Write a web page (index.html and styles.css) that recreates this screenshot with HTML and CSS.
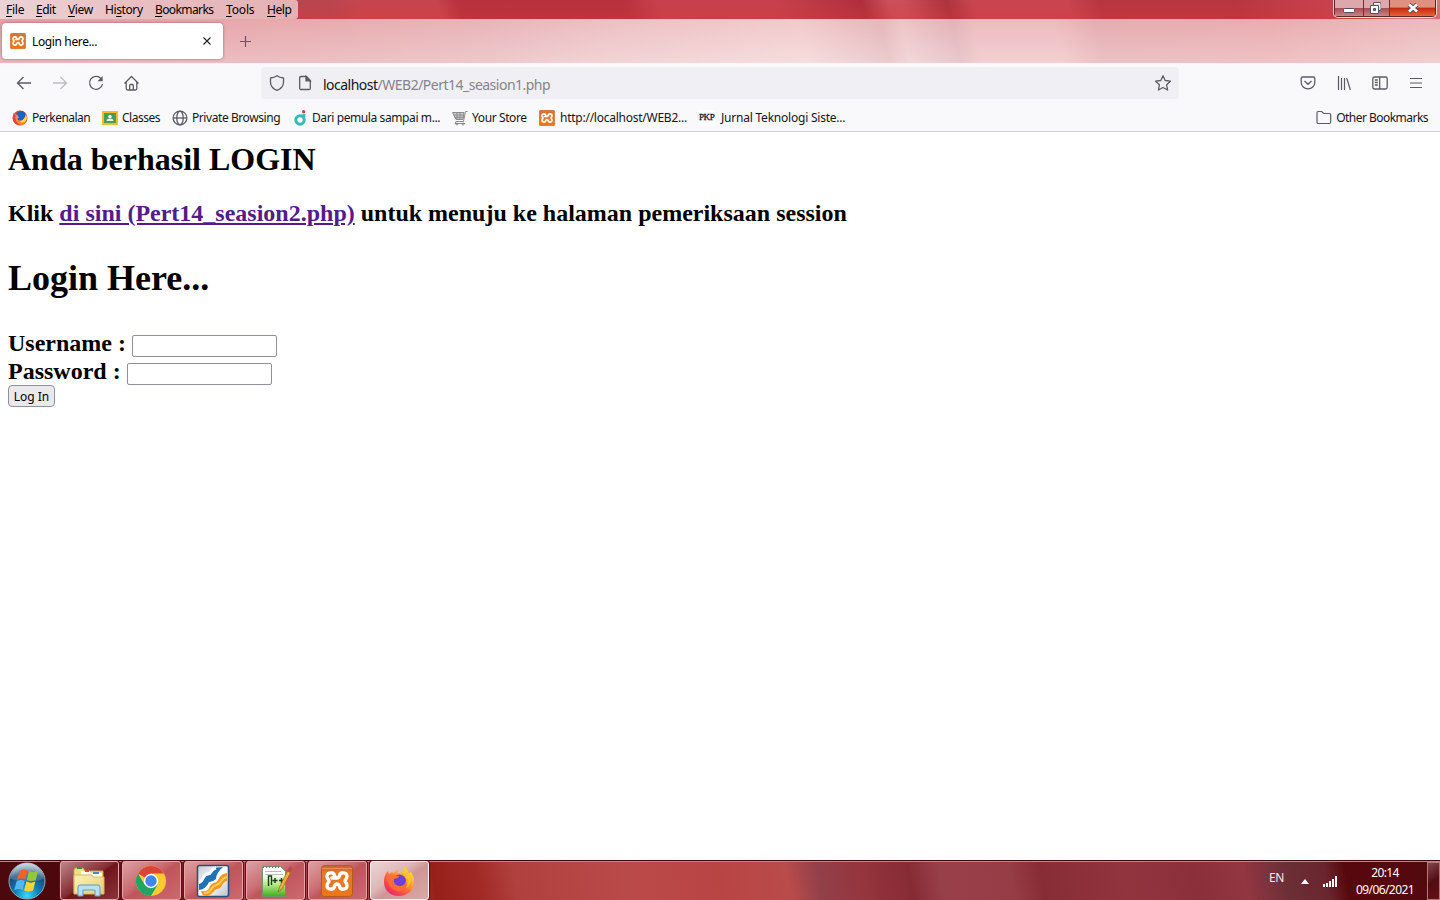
FILE: index.html
```html
<!DOCTYPE html>
<html lang="en">
<head>
<meta charset="utf-8">
<title>Login here...</title>
<link rel="stylesheet" href="styles.css">
</head>
<body>
<svg class="defs" width="0" height="0">
  <defs>
    <linearGradient id="orange" x2="0" y2="1"><stop stop-color="#c8642c"/><stop offset=".25" stop-color="#e27a30"/><stop offset="1" stop-color="#ee7518"/></linearGradient>
    <linearGradient id="fire" x1="1" y1="0" x2=".2" y2="1"><stop stop-color="#fff04a"/><stop offset=".35" stop-color="#ffb52a"/><stop offset=".65" stop-color="#ff603c"/><stop offset="1" stop-color="#e4206e"/></linearGradient>
    <radialGradient id="orb" cx=".5" cy=".9" r=".85"><stop stop-color="#36dcff"/><stop offset=".4" stop-color="#117cb4"/><stop offset=".75" stop-color="#174b78"/><stop offset="1" stop-color="#8ba6bb"/></radialGradient>
    <linearGradient id="gloss" x2="0" y2="1"><stop stop-color="#fff" stop-opacity=".8"/><stop offset="1" stop-color="#fff" stop-opacity=".15"/></linearGradient>
    <linearGradient id="paper" x2="0" y2="1"><stop offset=".25" stop-color="#fff"/><stop offset=".6" stop-color="#b5e88a"/><stop offset="1" stop-color="#3fae1a"/></linearGradient>
    <linearGradient id="manila" x2="1" y2="1"><stop stop-color="#fff3b5"/><stop offset="1" stop-color="#e8cc72"/></linearGradient>
    <linearGradient id="silver" x2="1" y2="1"><stop stop-color="#bfcbd6"/><stop offset=".5" stop-color="#fff"/><stop offset="1" stop-color="#b9c3cb"/></linearGradient>
    <symbol id="xampp" viewBox="0 0 32 32">
      <rect x=".5" y=".5" width="31" height="31" rx="3" fill="url(#orange)" stroke="#b85a20"/>
      <path d="M1 3.500h30" stroke="#eda06c" stroke-width="1" opacity=".7"/>
      <path d="M16 13C14.500 13 14 12.500 13.500 10.500C12.500 6.500 6 7 6 11.500C6 14 8 14.500 8 16C8 17.500 6 18 6 20.500C6 25 12.500 25.500 13.500 21.500C14 19.500 14.500 19 16 19C17.500 19 18 19.500 18.500 21.500C19.500 25.500 26 25 26 20.500C26 18 24 17.500 24 16C24 14.500 26 14 26 11.500C26 7 19.500 6.500 18.500 10.500C18 12.500 17.500 13 16 13ZM16 13H10.800" fill="none" stroke="#fff" stroke-width="3.300" stroke-linecap="round" stroke-linejoin="round"/>
    </symbol>
    <symbol id="firefox" viewBox="0 0 32 32">
      <path d="M21 1C24 4 25 6 25.500 8C27 9 27.500 6.500 27.500 6.500C30.500 10 31.500 14 31 18C30 26 24 31 16 31C7 31 1 25 1 17C1 12 2 9 5 6L6 9C8 7 9 7 11 8C12 6 14 5 15 5C14 7 15 8 18 9C20 7 21 4 21 1Z" fill="url(#fire)"/>
      <circle cx="16.500" cy="16" r="6.500" fill="#6a43d6"/>
      <path d="M3 11C7 9 11 11 16 11C15 14 13 13 11 14C10 18 13 21 17 21C20 21 22 19 23 16C25 22 20 27 15 26C8 25 4 18 3 11Z" fill="#ff6c38"/>
      <path d="M20 8c5 4 6 9 3 15c6-3 6-11 1-16Z" fill="#ffc332"/>
    </symbol>
  </defs>
</svg>

<header class="browser">
  <div class="titlebar">
    <nav class="menu">
      <span class="m-file"><u>F</u>ile</span><span class="m-edit"><u>E</u>dit</span><span class="m-view"><u>V</u>iew</span><span class="m-history">Hi<u>s</u>tory</span><span class="m-bookmarks"><u>B</u>ookmarks</span><span class="m-tools"><u>T</u>ools</span><span class="m-help"><u>H</u>elp</span>
    </nav>
    <div class="controls">
      <span class="ctl min"><svg width="14" height="12"><rect x="1.500" y="6.500" width="11" height="4" rx="1" fill="#fff" stroke="#555064"/></svg></span>
      <span class="ctl max"><svg width="14" height="14"><path d="M4.500 1.500h7v8h-7z" fill="#ddd" stroke="#555064"/><path d="M5 2.500h6v6" fill="none" stroke="#fff"/><path d="M1.500 4.500h8v8h-8z" fill="#fff" stroke="#555064"/><path d="M4.500 7.500h2v2h-2z" fill="#a66" stroke="#555064"/></svg></span>
      <span class="ctl close"><svg width="14" height="12"><path d="M3 2.500l8 7m0-7l-8 7" stroke="#555064" stroke-width="4.500"/><path d="M3 2.500l8 7m0-7l-8 7" stroke="#fff" stroke-width="2.600"/></svg></span>
    </div>
  </div>
  <div class="tabs">
    <div class="tab">
      <svg width="16" height="16"><use href="#xampp"/></svg>
      <span class="tab-title">Login here...</span>
      <svg class="tab-close" width="10" height="10"><path d="M1.500 1.500l7 7M8.500 1.500l-7 7" stroke="#26252c" stroke-width="1.200"/></svg>
    </div>
    <svg class="newtab" width="12" height="12"><path d="M5.500 0v11M0 5.500h11" stroke="#66575f" stroke-width="1.200"/></svg>
  </div>
  <div class="toolbar">
    <div class="nav">
      <svg width="16" height="16" fill="none" stroke="#5b5b66" stroke-width="1.300"><path d="M15 8H1.500M7.500 2l-6 6l6 6"/></svg>
      <svg width="16" height="16" fill="none" stroke="#bdbdc5" stroke-width="1.300"><path d="M1 8h13.500M8.500 2l6 6l-6 6"/></svg>
      <svg width="16" height="16" fill="none" stroke="#5b5b66" stroke-width="1.300"><path d="M13 3.500A6.500 6.500 0 1 0 14.500 9"/><path d="M14.700 1v5.200H9.500z" fill="#5b5b66" stroke="none"/></svg>
      <svg width="16" height="16" fill="none" stroke="#5b5b66" stroke-width="1.300"><path d="M.5 8.500l7-7l7 7M2.200 7v6.500q0 1.500 1.500 1.500h7.600q1.500 0 1.500-1.500V7M5.700 15v-4.500q0-1 1-1h1.600q1 0 1 1V15"/></svg>
    </div>
    <div class="urlbar">
      <svg width="16" height="16" fill="none" stroke="#5b5b66" stroke-width="1.300"><path d="M8 .8C10 2.300 12 2.800 14.500 3v4.500C14.300 11 11.500 14 8 15.300C4.500 14 1.700 11 1.500 7.500V3C4 2.800 6 2.300 8 .8Z"/></svg>
      <svg width="14" height="16" fill="none" stroke="#5b5b66" stroke-width="1.300"><path d="M8.500 1.500H3q-1.300 0-1.300 1.300v10.400Q1.700 14.500 3 14.500h8q1.300 0 1.300-1.300V5.500z"/><path d="M8 1.500v4.300h4.300z" fill="#5b5b66"/></svg>
      <span class="url">localhost<span class="path">/WEB2/Pert14_seasion1.php</span></span>
      <svg class="star" width="16" height="16" fill="none" stroke="#5b5b66" stroke-width="1.300" stroke-linejoin="round"><path d="M8 .8l2.200 4.700l5.200 .7l-3.800 3.600l1 5.200L8 12.500l-4.600 2.500l1-5.200L.6 6.200l5.200-.7z"/></svg>
    </div>
    <div class="tools">
      <svg width="16" height="16" fill="none" stroke="#5b5b66" stroke-width="1.300"><path d="M2.500 2h11q1.300 0 1.300 1.300V7.500a6.800 6.300 0 0 1-13.600 0V3.300Q1.200 2 2.500 2ZM4.500 6l3.500 3.300L11.500 6"/></svg>
      <svg width="16" height="16" fill="none" stroke="#5b5b66" stroke-width="1.200"><path d="M2.500 1v14M5.500 3v12M8.500 3v12M10.700 3l3.700 12"/></svg>
      <svg width="16" height="16" fill="none" stroke="#5b5b66" stroke-width="1.300"><rect x=".8" y="2" width="14.400" height="12" rx="1.700"/><path d="M7.700 2v12M2.800 5h3M2.800 7.500h3M2.800 10h3"/></svg>
      <svg width="16" height="16" fill="none" stroke="#5b5b66" stroke-width="1.200"><path d="M2 3.500h12M2 8h12M2 12.500h12"/></svg>
    </div>
  </div>
  <div class="bookmarks">
    <div class="bm b1"><svg width="16" height="16" viewBox="0 0 32 32"><circle cx="16" cy="16" r="15" fill="#e6443c"/><circle cx="18" cy="12" r="10" fill="#1d62c9"/><path d="M3 5C1 22 9 30 18 30C27 29 32 20 28 8C25 16 23 21 17 21C12 22 9 18 14 15L11 10C9 10 7 8 3 5Z" fill="#ff8d24"/><path d="M28 9c-2 9-8 13-13 14c5 3 13 1 15-7Z" fill="#ffe047"/><path d="M3 7C1 22 8 30 17 30C10 27 5 19 7 10Z" fill="#e83a48"/></svg><span>Perkenalan</span></div>
    <div class="bm b2"><svg width="16" height="16"><path d="M0 1h16v14H0z" fill="#f2bd28"/><path d="M2 3h12v10H2z" fill="#4a9c58"/><circle cx="8" cy="6.500" r="1.700" fill="#fff"/><path d="M4.500 11q0-2.500 3.500-2.500T11.500 11z" fill="#e6f5e9"/></svg><span>Classes</span></div>
    <div class="bm b3"><svg width="16" height="16" fill="none" stroke="#5b5b66" stroke-width="1.300"><circle cx="8" cy="8" r="6.900"/><ellipse cx="8" cy="8" rx="3.200" ry="6.900"/><path d="M1 8h14"/></svg><span>Private Browsing</span></div>
    <div class="bm b4"><svg width="16" height="16"><circle cx="8" cy="10" r="4.200" fill="none" stroke="#36bcb8" stroke-width="3"/><path d="M9 4.500l4.500-.5l-.5 4z" fill="#36bcb8"/><circle cx="11.700" cy="1.800" r="1.700" fill="#e72c64"/></svg><span>Dari pemula sampai m...</span></div>
    <div class="bm b5"><svg width="16" height="16" fill="none" stroke="#8b8b8b"><path d="M.5 2.500h11.500L11 9.500H4z" fill="#ccc"/><path d="M2 5h9.500M2.500 7.300h9M5 3v6M8 3v6M15.500 1.500h-2l-2 10H4l-1 2h10"/><circle cx="5" cy="14" r="1"/><circle cx="11" cy="14" r="1"/></svg><span>Your Store</span></div>
    <div class="bm b6"><svg width="16" height="16"><use href="#xampp"/></svg><span>http://localhost/WEB2...</span></div>
    <div class="bm b7"><span class="pkp">PKP</span><span>Jurnal Teknologi Siste...</span></div>
    <div class="bm other"><svg width="16" height="16" fill="none" stroke="#5b5b66" stroke-width="1.200"><path d="M2.200 1.500h3.500l2 2h5.500q1.500 0 1.500 1.500v7q0 1.500-1.500 1.500h-11Q1 13.500 1 12V2.700Q1 1.500 2.200 1.500Z"/></svg><span>Other Bookmarks</span></div>
  </div>
</header>

<main class="page">
  <h2 class="success">Anda berhasil LOGIN</h2>
  <p class="hint">Klik <a href="#">di sini (Pert14_seasion2.php)</a> untuk menuju ke halaman pemeriksaan session</p>
  <h1 class="heading">Login Here...</h1>
  <form>
    <label class="field">Username :<input type="text"></label>
    <label class="field">Password :<input type="password"></label>
    <button class="login" type="button">Log In</button>
  </form>
</main>

<footer class="taskbar">
  <div class="start"><svg width="40" height="40"><circle cx="20" cy="20" r="18" fill="url(#orb)" stroke="#8dabbf"/><path d="M3.500 18a16.500 16 0 0 1 33 0Q20 24 3.500 18Z" fill="url(#gloss)" opacity=".65"/><path d="M12.500 10q4-2.500 8-.5l-2.200 9q-4-2-8.300 .5z" fill="#f1612b"/><path d="M22 10q4 2.300 9 0l-2.200 9q-4.500 2-9 0z" fill="#91c83c"/><path d="M9.500 20.500q4-2.500 8.300-.5l-2.200 9q-4-2-8.300 .5z" fill="#54b7ee"/><path d="M19.300 20.500q4.500 2.300 9 0l-2.200 9q-4.500 2-9 0z" fill="#ffd136"/></svg></div>
  <div class="task dark"><svg width="34" height="34"><path d="M2 6q0-2 2-2h7l2 3h18v22H2z" fill="#f4dc87" stroke="#c7a34c"/><path d="M9 7h8l2 2h11v4H9z" fill="#fff"/><path d="M5 4h5" stroke="#1f9e35" stroke-width="2"/><path d="M13 7h4" stroke="#d84d29" stroke-width="2"/><path d="M21 9h6" stroke="#388ed0" stroke-width="2"/><path d="M2 11h17l3 2h10v17H2z" fill="url(#manila)" stroke="#d5b45c"/><path d="M6 32V23q0-2 2-2h18q2 0 2 2v9h-5v-6H11v6z" fill="#b5e0f5" stroke="#5b9fc7"/></svg></div>
  <div class="task"><svg width="32" height="32"><circle cx="16" cy="16" r="15" fill="#fcc934"/><path d="M16 16L3 8.500A15 15 0 0 1 29 8.500H16z" fill="#dc4437"/><path d="M3 8.500A15 15 0 0 0 16 31l6.500-11.300L16 16l-6.500 3.500z" fill="#1fa463"/><circle cx="16" cy="16" r="7.200" fill="#fff"/><circle cx="16" cy="16" r="5.700" fill="#4285f4"/></svg></div>
  <div class="task"><svg width="34" height="34"><rect x="1.500" y="1.500" width="31" height="31" rx="2" fill="url(#silver)" stroke="#244f7c" stroke-width="1.500"/><path d="M3 20C8 20 5 11 12 11C17 11 13 4 21 3.500L27 3Q20 9 20 15Q17 18 13 18Q10 25 3 26Z" fill="#1d74b5"/><path d="M3 18C8 18 6 10 12 10C16 10 14 5 20 4" fill="none" stroke="#fff" stroke-width="3"/><path d="M5 27C15 29 12 20 18 19C24 18 21 11 31 9V17C25 18 27 24 21 25C17 26 17 31 10 32Q6 32 5 27Z" fill="#ff9619"/><path d="M8 29C17 29 14 22 20 21C26 20 24 14 31 13" fill="none" stroke="#ffcf58" stroke-width="2"/></svg></div>
  <div class="task"><svg width="34" height="34"><path d="M4.500 2.500h18l5 5v25h-23z" fill="url(#paper)" stroke="#729367"/><path d="M5 3h17" stroke="#777" stroke-width="2" stroke-dasharray="1 2"/><path d="M7 7.500h16M7 10.500h18" stroke="#bbb"/><path d="M10.500 22V12h3v9M14.500 16.500h5M17 14v5M21 16.500h5M23.500 14v5" fill="none" stroke="#183c17" stroke-width="1.400"/><path d="M20 28l2-6L31 4l3 2l-10 19z" fill="#f3ae32" stroke="#946123" stroke-width=".7"/><path d="M29 7l3-5l3 2l-3 5z" fill="#b94a4d"/></svg></div>
  <div class="task"><svg width="32" height="32"><use href="#xampp"/></svg></div>
  <div class="task active"><svg width="32" height="32"><use href="#firefox"/></svg></div>
  <div class="tray">
    <span class="lang">EN</span>
    <svg class="up" width="8" height="5"><path d="M0 5l4-5l4 5z" fill="#fff"/></svg>
    <svg class="signal" width="15" height="12"><path d="M0 9h2v3H0zM3 8h2v4H3zM6 6h2v6H6zM9 4h2v8H9zM12 1h2v11h-2z" fill="#fff"/></svg>
    <div class="clock"><span class="time">20:14</span><span class="date">09/06/2021</span></div>
    <div class="peek"></div>
  </div>
</footer>
</body>
</html>
```
FILE: styles.css
```css
* { box-sizing: border-box; }
body {
  margin: 0;
  width: 1440px;
  height: 900px;
  overflow: hidden;
  display: flex;
  flex-direction: column;
  background: #fff;
  color: #000;
  font: 12px/16px "Noto Sans", "Open Sans", sans-serif;
}
svg { display: block; flex: none; }
.defs { position: absolute; }
.browser { height: 132px; flex: none; background: #f9f9fb; border-bottom: 1px solid #ccccd2; white-space: nowrap; }
.titlebar {
  height: 19px;
  display: flex;
  justify-content: space-between;
  background: linear-gradient(transparent, rgba(225, 55, 45, .25)), linear-gradient(72deg, #b84550 0 315px, #c5454e 345px 420px, #b7323e 440px 600px, #c6414d 630px 740px, #ae303d 825px, #c9505a 850px 865px, #ac333d 905px, #c84550 930px 1020px, #b73641 1050px 1180px, #c23e4b 1240px, #cb4550 1290px, #d98e93 1330px, #c85f65 1440px);
}
.menu { width: 298px; height: 19px; padding: 2px 0 0 6px; display: flex; background: linear-gradient(90deg, #edd3d6, #e9bfc2 45%, #e3b1b4); border-radius: 0 3px 3px 0; }
.menu span { flex: none; text-underline-offset: 2px; }
.m-file { width: 30px; letter-spacing: -.25px; }
.m-edit { width: 32px; letter-spacing: -.5px; }
.m-view { width: 37px; letter-spacing: -.4px; }
.m-history { width: 50px; letter-spacing: -.4px; }
.m-bookmarks { width: 71px; letter-spacing: -.6px; }
.m-tools { width: 41px; letter-spacing: -.15px; }
.m-help { letter-spacing: -.4px; }
.controls { width: 104px; height: 18px; margin-right: 3px; display: flex; border: 1px solid #f4d3d3; border-top: 0; border-radius: 0 0 5px 5px; box-shadow: inset 0 -1px #5b2929, inset 1px 0 #5b2929, inset -1px 0 #5b2929; overflow: hidden; }
.ctl { display: flex; justify-content: center; height: 16px; align-items: center; background: linear-gradient(#dca8ab 50%, #a84c50 52%, #c98588); }
.min { width: 29px; margin-left: 1px; border-right: 1px solid #6b3035; }
.max { width: 26px; border-right: 1px solid #6b3035; padding-right: 2px; }
.close { width: 45px; background: linear-gradient(#e0907e 45%, #c5280f 50%, #e8643a); }
.tabs { height: 44px; padding: 4px 0 0 2px; display: flex; background: linear-gradient(rgba(225, 120, 120, .12), rgba(255, 255, 255, .2)), linear-gradient(78deg, #e5a6ac, #e8b0b4 300px, #e9bcc0 480px, #efc9cc 600px, #f4d5d6 790px, #e6bfc2 870px, #efced0 890px, #e3bac0 940px, #efc4c7 960px 1040px, #e6b3b8 1080px, #ebb3b6 1250px, #edc3c5 1400px); }
.tab { width: 221px; height: 36px; padding: 0 11px 0 8px; display: flex; align-items: center; background: #fff; border-radius: 4px; box-shadow: 0 0 3px rgba(100, 45, 55, .6); }
.tab-title { margin-left: 6px; padding-top: 1px; letter-spacing: -.4px; }
.tab-title { letter-spacing: -.37px; }
.tab-close { margin-left: auto; }
.newtab { margin: 13px 0 0 17px; }
.toolbar { height: 40px; margin-bottom: 1px; display: flex; align-items: center; }
.nav { width: 261px; padding-left: 16px; display: flex; gap: 20px; }
.urlbar { width: 918px; height: 32px; padding: 0 8px; display: flex; align-items: center; border-radius: 4px; background: #f0f0f4; }
.urlbar svg:nth-child(2) { margin-left: 13px; }
.url { margin-left: 11px; padding-top: 3px; font-size: 14px; letter-spacing: -.51px; color: #15141a; }
.path { color: #85848b; }
.star { margin-left: auto; }
.tools { margin-left: 121px; display: flex; gap: 20px; }
.bookmarks { height: 27px; padding: 0 12px; display: flex; align-items: center; }
.bm { display: flex; align-items: center; gap: 4px; color: #15141a; letter-spacing: -.4px; }
.b1 { width: 90px; letter-spacing: -.55px; }
.b2 { width: 70px; letter-spacing: -.5px; }
.b3 { width: 120px; letter-spacing: -.43px; }
.b4 { width: 160px; }
.b5 { width: 87px; }
.b6 { width: 160px; gap: 5px; letter-spacing: -.25px; }
.b7 { width: 160px; gap: 6px; letter-spacing: -.22px; }
.pkp { width: 16px; height: 16px; background: #fff; font: 9px/15px "Liberation Serif", serif; letter-spacing: -.4px; -webkit-text-stroke: .3px #15141a; }
.other { margin-left: auto; letter-spacing: -.53px; }
.page { flex: 1; padding: 9px 8px 0; font-family: "Liberation Serif", "Times New Roman", serif; font-weight: bold; }
.success { margin: 0 0 22px; font-size: 32px; line-height: 36px; }
.hint { margin: 0 0 31px; font-size: 24px; line-height: 28px; }
.hint a { color: #551a8b; }
.heading { margin: 0 0 31px; font-size: 36px; line-height: 40px; }
.field { height: 28px; display: flex; gap: 6px; font-size: 24px; line-height: 28px; }
.field input { width: 145px; height: 22px; margin: 6px 0 0; padding: 1px 2px; border: 1px solid #8f8f9d; border-radius: 2px; background: #fff; }
.login { display: block; width: 47px; height: 22px; padding: 2px 0 0; border: 1px solid #8f8f9d; border-radius: 4px; background: #e9e9ed; color: #000; font: 12px/18px "Noto Sans", sans-serif; letter-spacing: 0; white-space: nowrap; }
.taskbar {
  height: 40px;
  flex: none;
  display: flex;
  border-top: 1px solid #3b0a0c;
  box-shadow: inset 0 1px #c48286;
  background: linear-gradient(80deg, #4c080d 0 60px, #7b161b 180px, #b04247 240px 400px, #962019 430px, #a12a26 475px, #b0403d 510px, #ba4a49 620px, #b94543 710px, #b94b4b 780px, #92404a 810px, #96353d 850px, #862b34 900px, #98404a 930px, #963c45 1000px, #872c35 1030px, #92343e 1110px, #8b303b 1180px, #923641 1230px, #6c2f37 1270px, #69252c 1310px, #57080c 1330px, #500a0e 1440px);
}
.start { width: 60px; padding-left: 7px; }
.task { width: 59px; height: 39px; margin-right: 3px; padding-right: 2px; display: flex; align-items: center; justify-content: center; border: 1px solid #e5a5a8; border-radius: 3px; box-shadow: 0 0 0 1px #55151a; background: linear-gradient(145deg, #dda0a3, #cb6e73 40%, #c0545b 52%, #cd6a6f); }
.task.dark { background: linear-gradient(145deg, #bd878b, #852b32 48%, #6e151c 52%, #8b343a); }
.task.active { background: linear-gradient(145deg, #ecd5d6, #deb6b7 40%, #cf9596 54%, #dba9a7); border-color: #fff0f0; }
.tray { flex: 1; display: flex; align-items: center; justify-content: flex-end; color: #fff; }
.lang { width: 16px; margin: -5px 16px 0 0; letter-spacing: -.3px; color: #f5e9e9; }
.up { margin: 1px 14px 0 0; }
.signal { margin-right: 17px; }
.clock { width: 60px; height: 34px; display: flex; flex-direction: column; align-items: center; line-height: 17px; letter-spacing: -.6px; }
.peek { width: 13px; height: 38px; margin-left: 12px; border: 1px solid #b4777b; background: linear-gradient(145deg, #81474b, #520d12 50%, #650f16); }
```
